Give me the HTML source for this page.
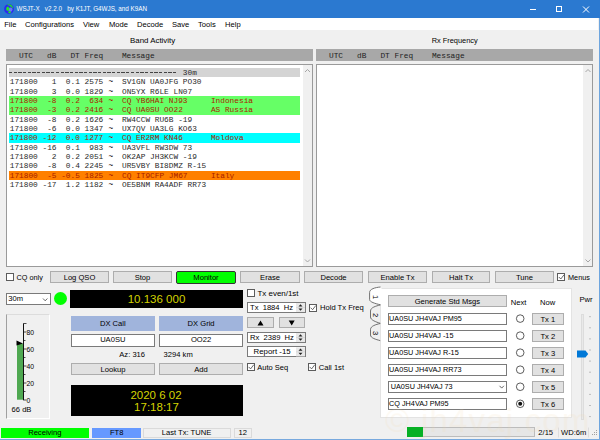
<!DOCTYPE html>
<html><head><meta charset="utf-8">
<style>
*{margin:0;padding:0;box-sizing:border-box}
html,body{width:600px;height:440px;overflow:hidden;background:#f0f0f0}
body{position:relative;font-family:"Liberation Sans",sans-serif;font-size:7.6px;color:#000}
.a{position:absolute}
.t{position:absolute;white-space:pre;line-height:1}
.btn{position:absolute;background:#e1e1e1;border:1px solid #adadad;text-align:center;white-space:pre}
.inp{position:absolute;background:#fff;border:1px solid #7a7a7a;white-space:pre}
.cb{position:absolute;width:8px;height:8px;background:#fff;border:1px solid #5c5c5c}
.mono{font-family:"Liberation Mono",monospace}
.list{position:absolute;background:#fff;border:1px solid #9a9a9a}
.row{position:absolute;left:2px;height:9.33px;line-height:9.33px;padding-top:0px;text-indent:-0.3px;color:#2a2a2a;font-family:"Liberation Mono",monospace;font-size:7.81px;white-space:pre;width:291px;padding-left:1px}
i{font-style:normal;display:inline-block;width:4.686px;text-align:center;transform:translateX(0.6px) scale(1,1.45);transform-origin:50% 60%}
.hdr{position:absolute;background:#a8a8a8;top:49px;height:12px;line-height:13px;font-family:"Liberation Mono",monospace;font-size:7.81px;white-space:pre;color:#222}
</style></head><body>
<!-- title bar -->
<div class="a" style="left:0;top:0;width:600px;height:17.5px;background:#2b79d0"></div>
<div class="a" style="left:598.7px;top:17.5px;width:1.3px;height:422.5px;background:#6ea5de"></div><div class="a" style="left:598px;top:0;width:2px;height:17.5px;background:#2b79d0"></div>
<div class="a" style="left:0;top:438.7px;width:600px;height:1.3px;background:#78a9de"></div>
<svg class="a" style="left:4px;top:3.8px" width="10" height="10" viewBox="0 0 10 10"><circle cx="5" cy="5" r="4.9" fill="#2b2bf0"/><circle cx="6.3" cy="5.6" r="2.2" fill="#6a78f5"/><path d="M2.2 5.2C2.2 3.6 3 2.6 4 2.6C4.8 2.8 4.6 4 5.4 4.4C5.2 5.8 4.6 7.2 3.4 6.8C2.6 6.5 2.2 6 2.2 5.2Z" fill="#22e822"/><path d="M3 0.6C4.8 0 7.5 0.4 8.6 2.8C9.2 4 8.8 4.6 8.4 4.4C7.6 3.2 6.2 1.8 3 0.6Z" fill="#22e822"/><ellipse cx="5.6" cy="8.3" rx="1.4" ry="1" fill="#22e822"/></svg>
<div class="t" style="left:16.5px;top:6.3px;font-size:6.3px;color:#fff">WSJT-X   v2.2.0   by K1JT, G4WJS, and K9AN</div>
<div class="a" style="left:529.5px;top:8.6px;width:6px;height:0.6px;background:#fff"></div>
<div class="a" style="left:555.8px;top:6px;width:6.2px;height:5.8px;border:0.6px solid #fff"></div>
<svg class="a" style="left:582px;top:5.5px" width="8" height="7" viewBox="0 0 8 7"><path d="M1 0.5L7 6.5M7 0.5L1 6.5" stroke="#fff" stroke-width="1"/></svg>
<!-- menu -->
<div class="a" style="left:0;top:17.5px;width:598px;height:12.2px;background:#fff"></div>
<div class="t" style="left:4.2px;top:20.8px">File</div>
<div class="t" style="left:25px;top:20.8px">Configurations</div>
<div class="t" style="left:83px;top:20.8px">View</div>
<div class="t" style="left:109px;top:20.8px">Mode</div>
<div class="t" style="left:137px;top:20.8px">Decode</div>
<div class="t" style="left:172px;top:20.8px">Save</div>
<div class="t" style="left:198px;top:20.8px">Tools</div>
<div class="t" style="left:225px;top:20.8px">Help</div>

<!-- labels -->
<div class="t" style="left:130px;top:36.8px;font-size:7.9px">Band Activity</div>
<div class="t" style="left:431.7px;top:36.8px;font-size:7.4px">Rx Frequency</div>

<!-- headers -->
<div class="hdr" style="left:6px;width:307px;padding-left:3.6px">  UTC   dB   DT Freq    Message</div>
<div class="hdr" style="left:316px;width:277px;padding-left:3.6px">  UTC   dB   DT Freq    Message</div>

<!-- left list -->
<div class="list" style="left:6px;top:64px;width:307px;height:203px">
 <div class="a" style="right:0;top:0;width:9.5px;height:201px;background:#f0f0f0"></div>
 <div class="row" style="top:3px;background:#d4d4d4"><span style="position:absolute;left:0.2px;top:3.6px;width:169px;height:1.1px;background:repeating-linear-gradient(90deg,#444 0 3.3px,transparent 3.3px 4.686px)"></span>                                     30m</div>
 <div class="row" style="top:12.33px">171800   1  0.1 2575 <i>~</i>  SV1GN UA0JFG PO30</div>
 <div class="row" style="top:21.66px">171800   3  0.0 1829 <i>~</i>  ON5YX R6LE LN07</div>
 <div class="row" style="top:31px;background:#66ff66;color:#a81c00">171800  -8  0.2  634 <i>~</i>  CQ YB6HAI NJ93     Indonesia</div>
 <div class="row" style="top:40.33px;background:#66ff66;color:#a81c00">171800  -3  0.2 2416 <i>~</i>  CQ UA0SU OO22      AS Russia</div>
 <div class="row" style="top:49.66px">171800  -8  0.2 1626 <i>~</i>  RW4CCW RU6B -19</div>
 <div class="row" style="top:59px">171800  -6  0.0 1347 <i>~</i>  UX7QV UA3LG KO63</div>
 <div class="row" style="top:68.33px;background:#00ffff;color:#a81c00">171800 -12  0.0 1277 <i>~</i>  CQ ER2RM KN46      Moldova</div>
 <div class="row" style="top:77.66px">171800 -16  0.1  983 <i>~</i>  UA3VFL RW3DW 73</div>
 <div class="row" style="top:87px">171800   2  0.2 2051 <i>~</i>  OK2AP JH3KCW -19</div>
 <div class="row" style="top:96.33px">171800  -8  0.4 2245 <i>~</i>  UR5VBY BI8DMZ R-15</div>
 <div class="row" style="top:105.66px;background:#ff8000;color:#a81c00">171800  -5 -0.5 1825 <i>~</i>  CQ IT9CFP JM67     Italy</div>
 <div class="row" style="top:115px">171800 -17  1.2 1182 <i>~</i>  OE5BNM RA4ADF RR73</div>
</div>
<!-- right list -->
<div class="list" style="left:316px;top:64px;width:277px;height:203px">
 <div class="a" style="right:0;top:0;width:9.5px;height:201px;background:#f0f0f0"></div>
</div>

<!-- button row -->
<div class="cb" style="left:6px;top:273px"></div>
<div class="t" style="left:16.6px;top:273.7px;font-size:7.25px">CQ only</div>
<div class="btn" style="left:50px;top:271px;width:59px;height:12px;line-height:11px">Log QSO</div>
<div class="btn" style="left:113px;top:271px;width:59px;height:12px;line-height:11px">Stop</div>
<div class="btn" style="left:176px;top:270.5px;width:60px;height:13px;line-height:11px;background:#00ff00;border-color:#333;border-radius:2px">Monitor</div>
<div class="btn" style="left:240px;top:271px;width:60px;height:12px;line-height:11px">Erase</div>
<div class="btn" style="left:304px;top:271px;width:59px;height:12px;line-height:11px">Decode</div>
<div class="btn" style="left:368px;top:271px;width:59px;height:12px;line-height:11px">Enable Tx</div>
<div class="btn" style="left:432px;top:271px;width:58px;height:12px;line-height:11px">Halt Tx</div>
<div class="btn" style="left:495px;top:271px;width:59px;height:12px;line-height:11px">Tune</div>
<div class="cb" style="left:557px;top:273px"></div>
<div class="t" style="left:568px;top:273.7px;font-size:7.3px">Menus</div>

<!-- freq row -->
<div class="inp" style="left:6px;top:292.5px;width:44.5px;height:12.2px;line-height:10px;padding-left:1.2px">30m</div>
<div class="a" style="left:54px;top:292px;width:13px;height:13px;border-radius:50%;background:#00ff00"></div>
<div class="a" style="left:70px;top:289.5px;width:173px;height:18.5px;background:#000"></div>
<div class="t" style="left:70px;top:293.7px;width:173px;text-align:center;font-size:11.5px;color:#d4d400">10.136 000</div>

<!-- meter -->
<div class="a" style="left:6px;top:313.5px;width:44px;height:105px;border-left:1px solid #a0a0a0;border-top:1px solid #dcdcdc;border-right:1px solid #fff;border-bottom:1px solid #fff"></div>

<!-- DX -->
<div class="a" style="left:70.6px;top:316px;width:84.4px;height:15px;background:#a0b4dc;text-align:center;line-height:15px">DX Call</div>
<div class="a" style="left:159px;top:316px;width:84.2px;height:15px;background:#a0b4dc;text-align:center;line-height:15px">DX Grid</div>
<div class="inp" style="left:70.6px;top:334.4px;width:84.4px;height:12.2px;line-height:10.8px;text-align:center">UA0SU</div>
<div class="inp" style="left:159px;top:334.4px;width:84.2px;height:12.2px;line-height:10.8px;text-align:center">OO22</div>
<div class="t" style="left:119.3px;top:351px">Az: 316</div>
<div class="t" style="left:163.6px;top:351px">3294 km</div>
<div class="btn" style="left:71px;top:363px;width:84px;height:12px;line-height:11px">Lookup</div>
<div class="btn" style="left:159px;top:363px;width:84px;height:12px;line-height:11px">Add</div>
<div class="a" style="left:71px;top:385px;width:172px;height:31px;background:#000"></div>
<div class="t" style="left:70px;top:389.6px;width:172px;text-align:center;font-size:11.5px;color:#d4d400">2020 6 02</div>
<div class="t" style="left:70.5px;top:401.6px;width:172px;text-align:center;font-size:11.5px;color:#d4d400">17:18:17</div>

<!-- tx controls -->
<div class="cb" style="left:247px;top:289px"></div>
<div class="t" style="left:257.5px;top:289.6px;font-size:7.95px">Tx even/1st</div>
<div class="inp" style="left:247px;top:302px;width:58.5px;height:10.7px;line-height:9.4px;padding-left:2px">Tx  1884  Hz</div>
<div class="cb" style="left:309px;top:303.5px"></div>
<div class="t" style="left:320px;top:304px">Hold Tx Freq</div>
<div class="btn" style="left:247px;top:317px;width:27px;height:11px"></div>
<div class="btn" style="left:278.5px;top:317px;width:26.5px;height:11px"></div>
<div class="inp" style="left:247px;top:332px;width:58.5px;height:10.7px;line-height:9.4px;padding-left:2px">Rx  2389  Hz</div>
<div class="inp" style="left:247px;top:346.4px;width:58.5px;height:10.9px;line-height:9.6px;padding-left:5.6px;font-size:7.85px">Report -15</div>
<div class="cb" style="left:247px;top:362.7px"></div>
<div class="t" style="left:257.3px;top:363.5px;font-size:7.5px">Auto Seq</div>
<div class="cb" style="left:308px;top:362.7px"></div>
<div class="t" style="left:318.7px;top:363.5px">Call 1st</div>

<!-- tab panel -->
<div class="a" style="left:379.7px;top:287.5px;width:192.5px;height:130.5px;background:#fff;border:1px solid #e3e3e3"></div>
<div class="btn" style="left:388px;top:295.3px;width:118.7px;height:12px;line-height:11px">Generate Std Msgs</div>
<div class="t" style="left:510.8px;top:298.7px">Next</div>
<div class="t" style="left:540px;top:298.7px">Now</div>

<div class="inp" style="left:387.5px;top:312.50px;width:119.2px;height:12.2px;line-height:10.6px;padding-left:0.6px;font-size:7.25px">UA0SU JH4VAJ PM95</div>
<div class="inp" style="left:387.5px;top:329.54px;width:119.2px;height:12.2px;line-height:10.6px;padding-left:0.6px;font-size:7.25px">UA0SU JH4VAJ -15</div>
<div class="inp" style="left:387.5px;top:346.58px;width:119.2px;height:12.2px;line-height:10.6px;padding-left:0.6px;font-size:7.25px">UA0SU JH4VAJ R-15</div>
<div class="inp" style="left:387.5px;top:363.62px;width:119.2px;height:12.2px;line-height:10.6px;padding-left:0.6px;font-size:7.25px">UA0SU JH4VAJ RR73</div>
<div class="inp" style="left:387.5px;top:380.66px;width:119.2px;height:12.2px;line-height:10.6px;padding-left:2.2px;font-size:7.25px">UA0SU JH4VAJ 73</div>
<div class="inp" style="left:387.5px;top:397.70px;width:119.2px;height:12.2px;line-height:10.6px;padding-left:0.6px;font-size:7.25px">CQ JH4VAJ PM95</div>
<div class="btn" style="left:532px;top:312.50px;width:31.7px;height:12.2px;line-height:11px">Tx 1</div>
<div class="btn" style="left:532px;top:329.54px;width:31.7px;height:12.2px;line-height:11px">Tx 2</div>
<div class="btn" style="left:532px;top:346.58px;width:31.7px;height:12.2px;line-height:11px">Tx 3</div>
<div class="btn" style="left:532px;top:363.62px;width:31.7px;height:12.2px;line-height:11px">Tx 4</div>
<div class="btn" style="left:532px;top:380.66px;width:31.7px;height:12.2px;line-height:11px">Tx 5</div>
<div class="btn" style="left:532px;top:397.70px;width:31.7px;height:12.2px;line-height:11px">Tx 6</div>

<!-- pwr -->
<div class="t" style="left:579.4px;top:296px">Pwr</div>
<div class="a" style="left:581px;top:313.5px;width:3px;height:106px;background:#e9e9e9;border:1px solid #dcdcdc"></div>

<!-- status bar -->
<div class="a" style="left:1px;top:427.5px;width:87.7px;height:10.3px;background:#00ff00;text-align:center;line-height:10.3px">Receiving</div>
<div class="a" style="left:92.4px;top:427.5px;width:48.6px;height:10.3px;background:#6699ff;text-align:center;line-height:10.3px">FT8</div>
<div class="a" style="left:142.5px;top:427.5px;width:88px;height:10.3px;border:1px solid #dadada;text-align:center;line-height:8.3px">Last Tx: TUNE</div>
<div class="a" style="left:234px;top:427.5px;width:17.5px;height:10.3px;border:1px solid #dadada;text-align:center;line-height:8.3px">12</div>
<div class="a" style="left:407px;top:427.2px;width:127.7px;height:10.3px;background:#e6e6e6;border:1px solid #bcbcbc"></div>
<div class="a" style="left:407px;top:427.2px;width:16px;height:10.3px;background:#06b025"></div>
<div class="t" style="left:538.3px;top:429px">2/15</div>
<div class="t" style="left:561px;top:429px">WD:6m</div>

<!-- scrollbar arrows -->
<svg class="a" style="left:0;top:0" width="600" height="440" viewBox="0 0 600 440">
 <g fill="none" stroke="#a6a6a6" stroke-width="1">
  <path d="M305 72L307.5 69.5L310 72"/>
  <path d="M305 259.5L307.5 262L310 259.5"/>
  <path d="M585.5 72L588 69.5L590.5 72"/>
  <path d="M585.5 259.5L588 262L590.5 259.5"/>
 </g>
 <!-- combo chevrons -->
 <g fill="none" stroke="#444" stroke-width="0.8">
  <path d="M43 298.5L45.2 300.8L47.4 298.5"/>
  <path d="M499.5 385.8L501.7 388.1L503.9 385.8"/>
 </g>
 <!-- spin boxes arrows area -->
 <g>
  <rect x="296" y="303" width="9" height="9" fill="#e8e8e8"/>
  <rect x="296" y="333" width="9" height="9" fill="#e8e8e8"/>
  <rect x="296" y="347.4" width="9" height="9" fill="#e8e8e8"/>
  <path d="M298.5 306.5L300.5 304.3L302.5 306.5Z M298.5 308.5L300.5 310.7L302.5 308.5Z" fill="#222"/>
  <path d="M298.5 336.5L300.5 334.3L302.5 336.5Z M298.5 338.5L300.5 340.7L302.5 338.5Z" fill="#222"/>
  <path d="M298.5 350.8L300.5 348.6L302.5 350.8Z M298.5 352.8L300.5 355L302.5 352.8Z" fill="#222"/>
  <path d="M296 307.5H305 M296 337.5H305 M296 351.8H305" stroke="#c8c8c8" stroke-width="0.5"/>
 </g>
 <!-- up/down triangles -->
 <path d="M257.5 325.5L260.5 320.5L263.5 325.5Z" fill="#000"/>
 <path d="M288.7 320.5L294.7 320.5L291.7 325.5Z" fill="#000"/>
 <!-- checkmarks -->
 <g fill="none" stroke="#3a3a3a" stroke-width="0.75">
  <path d="M558.8 277L560.8 279L564 274.8"/>
  <path d="M310.6 307.7L312.6 309.7L315.8 305.5"/>
  <path d="M248.6 366.9L250.6 368.9L253.8 364.7"/>
  <path d="M309.6 366.9L311.6 368.9L314.8 364.7"/>
 </g>
 <!-- tabs -->
 <rect x="379" y="287.8" width="2.5" height="16.6" fill="#fff"/>
 <path d="M380.5 287C375 287.5 369.6 289 369.6 292.5L369.6 299.5C369.6 302 375 303.5 380.5 304.8Z" fill="#fff"/>
 <g stroke="#5a5a5a" stroke-width="0.85" fill="none">
  <path d="M380.5 287C375 287.5 369.6 289 369.6 292.5L369.6 299.5C369.6 302 375 303.5 380.5 304.8"/>
  <path d="M380.2 305C376 306 370.5 307.5 370.5 311L370.5 317C370.5 320 376 322 380.2 323.3"/>
  <path d="M380.2 323.5C376 324.5 370.5 326 370.5 329.5L370.5 335C370.5 338 376 339.5 380.2 340.6"/>
 </g>
 <!-- radios -->
 <g fill="#fff" stroke="#333" stroke-width="0.8">
  <circle cx="520.2" cy="318.60" r="3.8"/>
  <circle cx="520.2" cy="335.64" r="3.8"/>
  <circle cx="520.2" cy="352.68" r="3.8"/>
  <circle cx="520.2" cy="369.72" r="3.8"/>
  <circle cx="520.2" cy="386.76" r="3.8"/>
  <circle cx="520.2" cy="403.80" r="3.8"/>
 </g>
 <circle cx="520.2" cy="403.80" r="2" fill="#111"/>
 <!-- meter -->
 <rect x="23" y="323.3" width="1" height="77" fill="#111"/><rect x="17" y="343.7" width="6" height="56" fill="#4fa851"/>
 <path d="M16.5 340.5L23 343.5L16.5 345.5Z" fill="#000"/>
 <g stroke="#222" stroke-width="0.8">
  
  <path d="M23.9 323.5H26.5 M23.9 332H26.5 M23.9 349H26.5 M23.9 366H26.5 M23.9 383H26.5 M23.9 400H26.5"/>
  <path d="M23.9 340.5H25.5 M23.9 357.5H25.5 M23.9 374.5H25.5 M23.9 391.5H25.5"/>
 </g>
 <!-- pwr ticks -->
 <g stroke="#b0b0b0" stroke-width="0.8">
  <path d="M589 316.7H591 M589 327.8H591 M589 338.9H591 M589 350H591 M589 361.1H591 M589 372.2H591 M589 383.3H591 M589 394.4H591 M589 405.5H591 M589 416.6H591"/>
 </g>
 <path d="M577 350.4H585.5L588.2 354L585.5 357.6H577Z" fill="#0078d7"/>
 <!-- status separators -->
 <g stroke="#d8d8d8" stroke-width="0.8">
  <path d="M558.5 427.5V437.5 M588.5 427.5V437.5"/>
 </g>
 <g fill="#a0a0a0">
  <rect x="596" y="430" width="1" height="1"/><rect x="594" y="432" width="1" height="1"/><rect x="596" y="432" width="1" height="1"/>
  <rect x="592" y="434" width="1" height="1"/><rect x="594" y="434" width="1" height="1"/><rect x="596" y="434" width="1" height="1"/>
 </g>
</svg>
<div class="t" style="left:26.6px;top:330px;font-size:6.8px">80</div>
<div class="t" style="left:26.6px;top:347px;font-size:6.8px">60</div>
<div class="t" style="left:26.6px;top:364px;font-size:6.8px">40</div>
<div class="t" style="left:26.6px;top:381px;font-size:6.8px">20</div>
<div class="t" style="left:26.6px;top:398px;font-size:6.8px">0</div>
<div class="t" style="left:11.6px;top:405.5px">66 dB</div>
<div class="t" style="left:369px;top:292.6px;width:12px;height:8px;line-height:8px;text-align:center;font-size:7.6px;transform:rotate(90deg)">1</div>
<div class="t" style="left:369px;top:310.5px;width:12px;height:8px;line-height:8px;text-align:center;font-size:7.6px;transform:rotate(90deg)">2</div>
<div class="t" style="left:369px;top:328.5px;width:12px;height:8px;line-height:8px;text-align:center;font-size:7.6px;transform:rotate(90deg)">3</div>
<div class="t" style="left:385px;top:404px;font-size:33px;letter-spacing:1.2px;color:#f5d9a8;opacity:0.13">© jh4vaj.com</div>
</body></html>
